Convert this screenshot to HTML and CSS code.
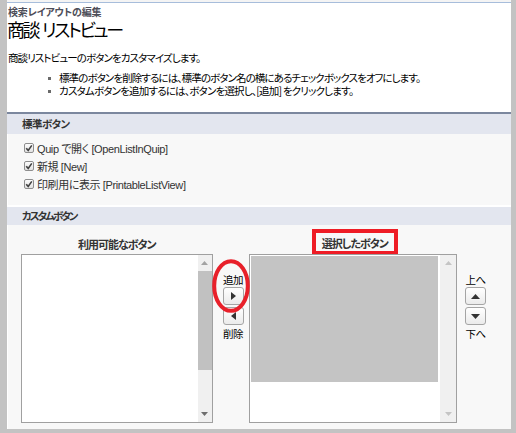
FILE: index.html
```html
<!DOCTYPE html>
<html lang="ja">
<head>
<meta charset="utf-8">
<link rel="stylesheet" href="styles.css">
</head>
<body>
<div class="page">
  <div class="intro">
    <div class="crumb">検索レイアウトの編集</div>
    <h1 class="title">商談 リストビュー</h1>
    <p class="desc">商談リストビューのボタンをカスタマイズします。</p>
    <ul class="tips">
      <li class="tip-long">標準のボタンを削除するには、標準のボタン名の横にあるチェックボックスをオフにします。</li>
      <li>カスタムボタンを追加するには、ボタンを選択し、[追加] をクリックします。</li>
    </ul>
  </div>

  <section class="sec">
    <h2 class="sec-head first">標準ボタン</h2>
    <div class="sec-body checks">
      <div class="chk"><span class="box"><svg viewBox="0 0 10 10" width="10" height="10"><path d="M2.2 5.2 L4.2 7.4 L7.8 2.4" fill="none" stroke="#444" stroke-width="1.6"/></svg></span>Quip で開く [OpenListInQuip]</div>
      <div class="chk"><span class="box"><svg viewBox="0 0 10 10" width="10" height="10"><path d="M2.2 5.2 L4.2 7.4 L7.8 2.4" fill="none" stroke="#444" stroke-width="1.6"/></svg></span>新規 [New]</div>
      <div class="chk"><span class="box"><svg viewBox="0 0 10 10" width="10" height="10"><path d="M2.2 5.2 L4.2 7.4 L7.8 2.4" fill="none" stroke="#444" stroke-width="1.6"/></svg></span>印刷用に表示 [PrintableListView]</div>
    </div>
  </section>

  <section class="sec grow">
    <h2 class="sec-head second">カスタムボタン</h2>
    <div class="sec-body dual">
      <div class="col col-left">
        <div class="col-label"><span>利用可能なボタン</span></div>
        <div class="listbox">
          <div class="list-area"></div>
          <div class="vscroll">
            <span class="arr"><svg viewBox="0 0 7 4" width="7" height="4"><path d="M0 4 L3.5 0 L7 4Z" fill="#a3a3a3"/></svg></span>
            <span class="thumb"></span>
            <span class="track"></span>
            <span class="arr"><svg viewBox="0 0 7 4" width="7" height="4"><path d="M0 0 L3.5 4 L7 0Z" fill="#6e6e6e"/></svg></span>
          </div>
        </div>
      </div>

      <div class="mover">
        <span class="lbl"><span>追加</span></span>
        <span class="btn"><svg viewBox="0 0 5 8" width="5" height="8"><path d="M0 0 L5 4 L0 8Z" fill="#333"/></svg></span>
        <span class="btn"><svg viewBox="0 0 5 8" width="5" height="8"><path d="M5 0 L0 4 L5 8Z" fill="#333"/></svg></span>
        <span class="lbl"><span>削除</span></span>
        <svg class="ring" viewBox="0 0 38 54" width="38" height="54"><ellipse cx="19" cy="27" rx="16.8" ry="24.8" fill="none" stroke="#e8202a" stroke-width="4"/></svg>
      </div>

      <div class="col col-right">
        <div class="col-label"><span class="marked">選択したボタン</span></div>
        <div class="listbox">
          <div class="list-area"><div class="selected"></div></div>
          <div class="vscroll wide">
            <span class="arr"><svg viewBox="0 0 7 4" width="7" height="4"><path d="M0 4 L3.5 0 L7 4Z" fill="#c4c4c4"/></svg></span>
            <span class="track"></span>
            <span class="arr"><svg viewBox="0 0 7 4" width="7" height="4"><path d="M0 0 L3.5 4 L7 0Z" fill="#c4c4c4"/></svg></span>
          </div>
        </div>
      </div>

      <div class="mover orderer">
        <span class="lbl"><span>上へ</span></span>
        <span class="btn"><svg viewBox="0 0 9 5" width="9" height="5"><path d="M0 5 L4.5 0 L9 5Z" fill="#333"/></svg></span>
        <span class="btn"><svg viewBox="0 0 9 5" width="9" height="5"><path d="M0 0 L4.5 5 L9 0Z" fill="#333"/></svg></span>
        <span class="lbl"><span>下へ</span></span>
      </div>
    </div>
  </section>
</div>
</body>
</html>
```

FILE: styles.css
```css
* { box-sizing: border-box; }

html, body {
  margin: 0;
  padding: 0;
}

body {
  background: #c3c3c3;
  font-family: "Noto Sans CJK JP", sans-serif;
  font-feature-settings: "palt";
  font-size: 10.5px;
  color: #000;
}

.page {
  margin: 0 5px 4px 7px;
  width: 504px;
  height: 429px;
  background: #fff;
  border-top: 2px solid #f4f4f4;
  box-shadow: inset 0 1px 0 #a7bddb;
  display: flex;
  flex-direction: column;
}

.intro {
  padding: 4px 0 0 1px;
}

.crumb {
  font-size: 10px;
  line-height: 12px;
  letter-spacing: -0.2px;
  font-weight: bold;
  color: #4e4e58;
}

.title {
  margin: 1px 0 0 -1px;
  font-size: 18px;
  line-height: 20px;
  letter-spacing: -2.4px;
  word-spacing: 2px;
  font-weight: normal;
  color: #000;
}

.desc {
  margin: 12px 0 0 0;
  line-height: 13px;
  letter-spacing: -0.9px;
}

.tips {
  list-style: none;
  margin: 7px 0 15px 0;
  padding: 0 0 0 40px;
  line-height: 13px;
  letter-spacing: -0.8px;
}

.tips .tip-long {
  letter-spacing: -0.9px;
}

.tips li::before {
  content: "";
  display: inline-block;
  width: 3px;
  height: 3px;
  background: #6a6a6a;
  margin-right: 8px;
  vertical-align: 2px;
}

.sec {
  display: flex;
  flex-direction: column;
}

.sec.grow {
  flex: 1;
}

.sec-head {
  margin: 0;
  background: #e3e6ef;
  font-size: 10.5px;
  font-weight: bold;
  color: #333;
  padding-left: 15px;
}

.sec-head.first {
  border-top: 2px solid #7b879e;
  line-height: 20px;
  letter-spacing: -0.6px;
}

.sec-head.second {
  border-top: 2px solid #fff;
  line-height: 18px;
  letter-spacing: -2px;
}

.sec-body {
  background: #f8f8f8;
  box-shadow: inset 1px 0 0 #fff;
}

.checks {
  padding: 5px 0 12px 17px;
}

.chk {
  display: flex;
  align-items: center;
  height: 18px;
  font-family: "Liberation Sans", "Noto Sans CJK JP", sans-serif;
  font-size: 11px;
  letter-spacing: -0.4px;
  color: #333;
}

.box {
  width: 10px;
  height: 10px;
  border: 1px solid #8e8e8e;
  border-radius: 2px;
  background: linear-gradient(#fdfdfd, #e2e2e2);
  margin-right: 3px;
  display: flex;
  align-items: center;
  justify-content: center;
  overflow: hidden;
}

.box svg {
  display: block;
  flex: none;
}

.dual {
  flex: 1;
  display: flex;
  padding: 5px 0 6px 14px;
}

.col {
  display: flex;
  flex-direction: column;
}

.col-left { width: 192px; }
.col-right { width: 209px; }

.col-label {
  height: 24px;
  display: flex;
  align-items: flex-end;
  justify-content: center;
  padding-bottom: 3px;
  font-size: 11px;
  font-weight: bold;
  letter-spacing: -1px;
  color: #333;
  line-height: 13px;
}

.col-label .marked {
  padding: 4px 6px 1px 6px;
  outline: 4px solid #ee1c25;
  margin-left: 4px;
}

.listbox {
  height: 169px;
  border: 1px solid #a0a0a0;
  background: #fff;
  display: flex;
}

.list-area {
  flex: 1;
  padding: 1px;
}

.selected {
  width: 187px;
  height: 126px;
  background: #c4c4c4;
}

.vscroll {
  width: 14px;
  background: #f0f0f0;
  display: flex;
  flex-direction: column;
}

.vscroll.wide {
  width: 16px;
}

.arr {
  height: 16px;
  display: flex;
  align-items: center;
  justify-content: center;
}

.arr svg { display: block; }

.thumb {
  height: 99px;
  background: #c1c1c1;
}

.track { flex: 1; }

.mover {
  position: relative;
  width: 36px;
  padding: 44px 0 0 10px;
  display: flex;
  flex-direction: column;
  align-items: flex-start;
}

.orderer {
  width: 54px;
  padding: 44px 0 0 8px;
}

.lbl {
  width: 21px;
  height: 13px;
  display: flex;
  justify-content: center;
  line-height: 12px;
  font-size: 10.5px;
  letter-spacing: -0.5px;
  white-space: nowrap;
  color: #000;
}

.btn {
  width: 21px;
  height: 18px;
  border: 1px solid #a5a5a5;
  border-radius: 3px;
  background: linear-gradient(#ffffff, #ebebeb);
  display: flex;
  align-items: center;
  justify-content: center;
  margin-bottom: 2px;
}

.btn + .lbl { margin-top: 1px; }

.btn svg { display: block; }

.ring {
  position: absolute;
  left: -1px;
  top: 29px;
}
```
